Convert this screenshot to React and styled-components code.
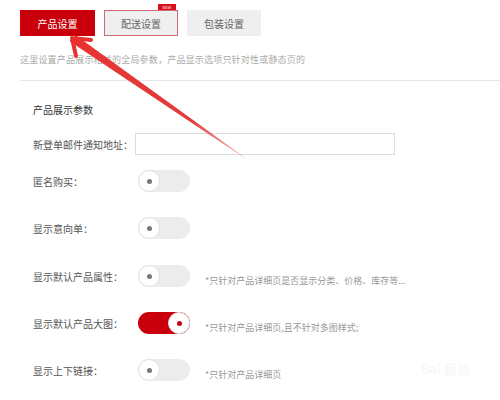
import React from "react";
import styled, { createGlobalStyle } from "styled-components";

const GlobalStyle = createGlobalStyle`
  body {
    margin: 0;
    background: #fff;
    font-family: "Noto Sans CJK SC", "Noto Sans", sans-serif;
  }
`;

const Page = styled.div`
  position: relative;
  width: 500px;
  height: 400px;
  overflow: hidden;
  padding: 10px 0 0 20px;
  box-sizing: border-box;
`;

const Tabs = styled.div`
  display: flex;
  gap: 9px;
`;

const Tab = styled.div`
  position: relative;
  width: ${(p) => (p.active ? "75px" : "74px")};
  height: 26px;
  box-sizing: border-box;
  display: flex;
  align-items: center;
  justify-content: center;
  font-size: 10px;
  color: ${(p) => (p.active ? "#fff" : "#666")};
  background: ${(p) => (p.active ? "#c9000b" : "#efefef")};
  border: ${(p) => (p.outlined ? "1px solid #cf6a73" : "none")};
`;

const Badge = styled.span`
  position: absolute;
  top: -7px;
  right: 1px;
  width: 18px;
  height: 6px;
  background: #d8101a;
  color: #fff;
  font-size: 4px;
  line-height: 6px;
  text-align: center;
`;

const Desc = styled.div`
  margin-top: 17px;
  font-size: 9px;
  color: #aaa;
  letter-spacing: 0.2px;
`;

const Divider = styled.div`
  margin-top: 14px;
  height: 1px;
  background: #e6e6e6;
`;

const Form = styled.div`
  padding: 22px 0 0 13px;
  display: flex;
  flex-direction: column;
`;

const SectionTitle = styled.div`
  font-size: 10px;
  color: #333;
  height: 14px;
  line-height: 14px;
`;

const Row = styled.div`
  display: flex;
  align-items: center;
  height: 22px;
  margin-top: ${(p) => p.mt || 25}px;
`;

const Label = styled.div`
  width: ${(p) => (p.wide ? 102 : 105)}px;
  font-size: 10px;
  color: #555;
`;

const Input = styled.div`
  width: 260px;
  height: 22px;
  box-sizing: border-box;
  border: 1px solid #ddd;
  background: #fff;
`;

const Switch = styled.div`
  width: 52px;
  height: 22px;
  border-radius: 11px;
  box-sizing: border-box;
  background: ${(p) => (p.on ? "#c9000b" : "#ececec")};
  display: flex;
  justify-content: ${(p) => (p.on ? "flex-end" : "flex-start")};
  align-items: center;
  flex-shrink: 0;
`;

const Knob = styled.div`
  width: 22px;
  height: 22px;
  border-radius: 50%;
  background: #fff;
  border: 1px solid #e2e2e2;
  box-sizing: border-box;
  display: flex;
  align-items: center;
  justify-content: center;
  &::after {
    content: "";
    width: 5px;
    height: 5px;
    border-radius: 50%;
    background: ${(p) => (p.on ? "#c9000b" : "#777")};
  }
`;

const Note = styled.div`
  margin-left: 15px;
  margin-top: 8px;
  font-size: 9px;
  color: #999;
`;

const Arrow = styled.svg`
  position: absolute;
  left: 0;
  top: 0;
  pointer-events: none;
`;

const Watermark = styled.div`
  position: absolute;
  right: 30px;
  bottom: 22px;
  font-size: 13px;
  color: #f8f8f8;
  font-weight: bold;
`;

function Toggle({ on }) {
  return (
    <Switch on={on}>
      <Knob on={on} />
    </Switch>
  );
}

export default function App() {
  return (
    <>
      <GlobalStyle />
      <Page>
        <Tabs>
          <Tab active>产品设置</Tab>
          <Tab outlined>
            配送设置
            <Badge>NEW</Badge>
          </Tab>
          <Tab>包装设置</Tab>
        </Tabs>
        <Desc>这里设置产品展示相关的全局参数，产品显示选项只针对性或静态页的</Desc>
        <Divider />
        <Form>
          <SectionTitle>产品展示参数</SectionTitle>
          <Row mt={16}>
            <Label wide>新登单邮件通知地址：</Label>
            <Input />
          </Row>
          <Row mt={15}>
            <Label>匿名购买：</Label>
            <Toggle />
          </Row>
          <Row>
            <Label>显示意向单：</Label>
            <Toggle />
          </Row>
          <Row mt={26}>
            <Label>显示默认产品属性：</Label>
            <Toggle />
            <Note>*只针对产品详细页是否显示分类、价格、库存等...</Note>
          </Row>
          <Row>
            <Label>显示默认产品大图：</Label>
            <Toggle on />
            <Note>*只针对产品详细页,且不针对多图样式;</Note>
          </Row>
          <Row>
            <Label>显示上下链接：</Label>
            <Toggle />
            <Note>*只针对产品详细页</Note>
          </Row>
        </Form>
        <Watermark>Bai 经验</Watermark>
        <Arrow width="500" height="400" viewBox="0 0 500 400">
          <defs>
            <linearGradient id="fade" x1="72" y1="38" x2="244" y2="158" gradientUnits="userSpaceOnUse">
              <stop offset="0" stopColor="#e8322f" />
              <stop offset="0.7" stopColor="#e23c3c" />
              <stop offset="1" stopColor="#e04a4a" stopOpacity="0.1" />
            </linearGradient>
          </defs>
          <path d="M70 41 L76 36 L245 158 Z" fill="url(#fade)" stroke="url(#fade)" strokeWidth="1" strokeLinejoin="round" />
          <path d="M72 38 L91 40 M72 38 L76 56" stroke="#e8322f" strokeWidth="4" strokeLinecap="round" fill="none" />
        </Arrow>
      </Page>
    </>
  );
}
